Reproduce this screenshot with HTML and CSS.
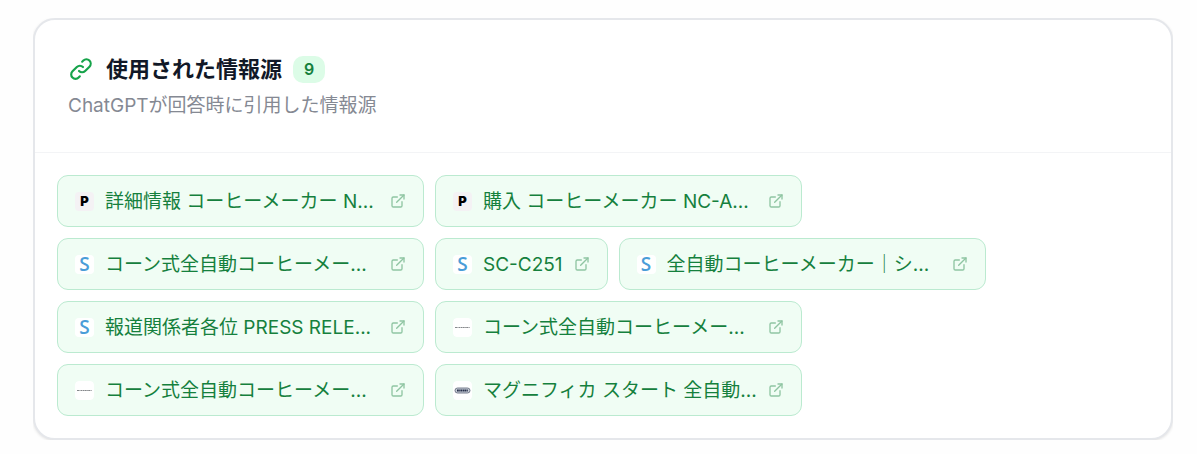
FILE: index.html
```html
<!DOCTYPE html>
<html lang="ja">
<head>
  <meta charset="UTF-8">
  <meta name="viewport" content="width=device-width, initial-scale=1.0">
  <title>使用された情報源</title>
  <link rel="stylesheet" href="styles.css">
</head>
<body>

  <!-- Shared icons -->
  <svg class="sprite" aria-hidden="true">
    <symbol id="external" viewBox="0 0 24 24">
      <path d="M15 3h6v6"/>
      <path d="M10 14 21 3"/>
      <path d="M18 13v6a2 2 0 0 1-2 2H5a2 2 0 0 1-2-2V8a2 2 0 0 1 2-2h6"/>
    </symbol>
    <symbol id="maker" viewBox="0 0 19 19">
      <rect width="19" height="19" rx="4" fill="#fff"/>
      <path d="M2 9.5h15" stroke="#85888b" stroke-width="1" stroke-dasharray="2 .4 1 .3 1.5 .4"/>
    </symbol>
  </svg>

  <section class="card">
    <header class="card-header">
      <div class="title-row">
        <svg class="link-icon" viewBox="0 0 24 24" aria-hidden="true">
          <path d="M13.828 10.172a4 4 0 0 0-5.656 0l-4 4a4 4 0 1 0 5.656 5.656l1.102-1.101m-.758-4.899a4 4 0 0 0 5.656 0l4-4a4 4 0 0 0-5.656-5.656l-1.1 1.1"/>
        </svg>
        <h2>使用された情報源</h2>
        <span class="count">9</span>
      </div>
      <p class="subtitle">ChatGPTが回答時に引用した情報源</p>
    </header>

    <div class="sources">
      <a class="source" href="#">
        <span class="favicon letter-p">P</span>
        <span class="name long">詳細情報 コーヒーメーカー N...</span>
        <svg class="external"><use href="#external"/></svg>
      </a>
      <a class="source" href="#">
        <span class="favicon letter-p">P</span>
        <span class="name long">購入 コーヒーメーカー NC-A...</span>
        <svg class="external"><use href="#external"/></svg>
      </a>
      <a class="source" href="#">
        <span class="favicon letter-s">S</span>
        <span class="name long">コーン式全自動コーヒーメー...</span>
        <svg class="external"><use href="#external"/></svg>
      </a>
      <a class="source" href="#">
        <span class="favicon letter-s">S</span>
        <span class="name">SC-C251</span>
        <svg class="external"><use href="#external"/></svg>
      </a>
      <a class="source" href="#">
        <span class="favicon letter-s">S</span>
        <span class="name long">全自動コーヒーメーカー｜シ...</span>
        <svg class="external"><use href="#external"/></svg>
      </a>
      <a class="source" href="#">
        <span class="favicon letter-s">S</span>
        <span class="name long">報道関係者各位 PRESS RELE...</span>
        <svg class="external"><use href="#external"/></svg>
      </a>
      <a class="source" href="#">
        <svg class="favicon"><use href="#maker"/></svg>
        <span class="name long">コーン式全自動コーヒーメー...</span>
        <svg class="external"><use href="#external"/></svg>
      </a>
      <a class="source" href="#">
        <svg class="favicon"><use href="#maker"/></svg>
        <span class="name long">コーン式全自動コーヒーメー...</span>
        <svg class="external"><use href="#external"/></svg>
      </a>
      <a class="source" href="#">
        <svg class="favicon" viewBox="0 0 19 19">
          <rect width="19" height="19" rx="4" fill="#fff"/>
          <rect x="2" y="7" width="15" height="5" rx="2.5" fill="#c9ced8" stroke="#596174" stroke-width=".8"/>
          <path d="M4 9.5h11" stroke="#27304a" stroke-width="1.8" stroke-dasharray="1.8 .4 1.2 .3"/>
        </svg>
        <span class="name long">マグニフィカ スタート 全自動...</span>
        <svg class="external"><use href="#external"/></svg>
      </a>
    </div>
  </section>

</body>
</html>
```

FILE: styles.css
```css
* {
  box-sizing: border-box;
}
body {
  margin: 18px 24px 14px 33px;
  background: #fefefe;
  font-family: Inter, "Noto Sans CJK JP", sans-serif;
}
.sprite {
  display: none;
}
.card {
  background: #fff;
  border: 2px solid #e5e7eb;
  border-radius: 22px;
  box-shadow: 0 1px 3px rgba(0, 0, 0, 0.12);
}
.card-header {
  padding: 33px 33px 32px;
  border-bottom: 1px solid #f3f4f6;
}
.title-row {
  display: flex;
  align-items: center;
}
.link-icon {
  width: 26px;
  height: 26px;
  margin-right: 12px;
  fill: none;
  stroke: #16a34a;
  stroke-width: 2;
  stroke-linecap: round;
  stroke-linejoin: round;
}
h2 {
  margin: 0;
  color: #111827;
  font-size: 22px;
  font-weight: 600;
  line-height: 32px;
}
.count {
  margin-left: 11px;
  padding: 0 11px;
  border-radius: 10px;
  background: #dcfce7;
  color: #15803d;
  font-size: 16px;
  font-weight: 600;
  line-height: 27px;
}
.subtitle {
  margin: 7px 0 0;
  color: #858993;
  font-size: 19px;
  line-height: 28px;
}
.sources {
  display: flex;
  flex-wrap: wrap;
  gap: 11px;
  padding: 22px;
}
.source {
  display: flex;
  align-items: center;
  gap: 11px;
  height: 52px;
  padding: 0 17px;
  border: 1px solid #bbead0;
  border-radius: 11px;
  background: #f0fdf4;
  color: #15803d;
  text-decoration: none;
}
.source:hover {
  background: #dcfce7;
}
.favicon {
  flex: none;
  width: 19px;
  height: 19px;
  border-radius: 4px;
  line-height: 19px;
  text-align: center;
}
.letter-p {
  background: #f4f2f4;
  color: #000;
  font-size: 13px;
  font-weight: 900;
}
.letter-s {
  background: #fff;
  color: #4a9dd8;
  font-family: "Open Sans", sans-serif;
  font-size: 19px;
  font-weight: 600;
}
.name {
  padding-top: 2px;
  overflow: hidden;
  font-size: 19px;
  line-height: 28px;
  white-space: nowrap;
}
.long {
  width: 274px;
}
.external {
  flex: none;
  width: 16px;
  height: 16px;
  fill: none;
  stroke: #8fc5a2;
  stroke-width: 2;
  stroke-linecap: round;
  stroke-linejoin: round;
}
```
